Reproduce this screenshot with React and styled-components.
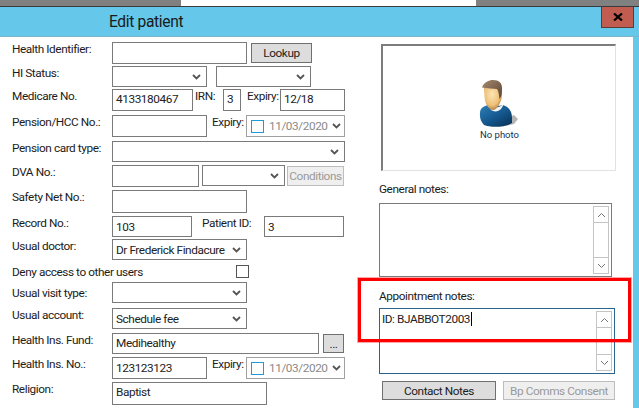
import React from "react";
import styled, { createGlobalStyle } from "styled-components";

const Global = createGlobalStyle`
  html, body { margin: 0; padding: 0; background: #fff; overflow: hidden; }
  * { box-sizing: border-box; }
`;
const FONT = `Roboto, "Open Sans", "Liberation Sans", Arial, sans-serif`;

const Page = styled.div`
  width: 639px; height: 408px; display: flex; flex-direction: column; overflow: hidden;
  font-family: ${FONT}; font-size: 11.8px; letter-spacing: -0.42px; color: #000; position: relative;
`;
const TopStrip = styled.div`
  height: 7px; display: flex; border-bottom: 1px solid #3a3a3a; flex: none;
`;
const StripSegment = styled.div`
  width: ${p => p.$w}px; background: ${p => p.$c};
`;
const TitleBar = styled.header`
  height: 30px; flex: none; background: #65c8ea; border-bottom: 1px solid #7fb4cc;
  display: flex; align-items: flex-start; padding-left: 109px; position: relative;
`;
const Title = styled.h1`
  margin: 5px 0 0; font-size: 15.6px; letter-spacing: -0.35px; font-weight: 400; line-height: 21px; color: #1a1a1a; flex: 1;
`;
const CloseButton = styled.div`
  width: 33px; height: 21px; margin-right: 5px; background: #c05c50; border: 1px solid #5c3a36; border-top: 0;
  display: flex; align-items: center; justify-content: center;
`;
const Body = styled.main`
  flex: 1; display: flex; border-right: 6px solid #65c8ea; background: #fff; min-height: 0;
`;
const LeftPane = styled.section`
  width: 379px; flex: none; padding: 5px 0 0 12px; display: flex; flex-direction: column;
`;
const RightPane = styled.section`
  flex: 1; display: flex; flex-direction: column; align-items: flex-start; position: relative;
`;
const Row = styled.div`
  height: ${p => p.$h}px; flex: none; display: flex; align-items: flex-start;
`;
const Label = styled.label`
  width: ${p => p.$w || 100}px; flex: none; line-height: 14px; margin-left: ${p => p.$ml || 0}px;
  padding-top: ${p => p.$pt ?? 0}px; white-space: nowrap; color: #1c1c1c;
`;
const Field = styled.div`
  width: ${p => p.$w}px; height: ${p => p.$h}px; flex: none; margin-left: ${p => p.$ml || 0}px;
  border: 1px solid #7a7a7a; background: #fff; padding: ${p => p.$pt ?? 2}px 0 0 3px; line-height: 14px;
  color: #222; white-space: nowrap; overflow: hidden;
`;
const SelectBox = styled.div`
  width: ${p => p.$w}px; height: 21px; flex: none; margin-left: ${p => p.$ml || 0}px;
  border: 1px solid #7a7a7a; background: #fff; display: flex; align-items: center;
  justify-content: space-between; padding: 0 5px 0 3px; line-height: 14px; white-space: nowrap; color: #222;
`;
const DateBox = styled.div`
  width: 99px; height: 22px; flex: none; margin-left: ${p => p.$ml || 0}px;
  border: 1px solid #a0a0a0; background: #fff; display: flex; align-items: center;
  padding: 0 3px 0 4px; color: #8a8a8a; white-space: nowrap;
`;
const DateCheck = styled.span`
  width: 13px; height: 13px; border: 1px solid #1e9ad6; margin-right: 5px; flex: none;
`;
const DateText = styled.span`flex: 1;`;
const Button = styled.div`
  width: ${p => p.$w}px; height: ${p => p.$h}px; flex: none; margin: ${p => p.$mt || 0}px 0 0 ${p => p.$ml || 0}px;
  border: 1px solid ${p => (p.$disabled ? "#bdbdbd" : "#707070")};
  background: ${p => (p.$disabled ? "#efefef" : "#dddddd")};
  color: ${p => (p.$disabled ? "#9a9a9a" : "#1c1c1c")};
  display: flex; align-items: center; justify-content: center; line-height: 14px; white-space: nowrap;
`;
const CheckBox = styled.span`
  width: 13px; height: 13px; border: 1px solid #555; background: #fff; flex: none;
`;
const PhotoBox = styled.div`
  width: 235px; height: 127px; margin: 7px 0 0 2px; flex: none;
  border: 1px solid #e2e2e2; border-top: 2px solid #7d7d7d; border-left: 2px solid #7d7d7d;
  display: flex; flex-direction: column; align-items: center; padding-top: 34px;
`;
const PhotoCaption = styled.span`
  font-size: 9.5px; letter-spacing: 0; line-height: 12px; margin-top: 2px; color: #16304e; margin-left: 1px;
`;
const NotesLabel = styled.div`
  line-height: 14px; margin-top: ${p => p.$mt}px; color: #1c1c1c;
`;
const NotesBox = styled.div`
  width: ${p => p.$w}px; height: ${p => p.$h}px; margin-top: ${p => p.$mt}px; flex: none;
  border: 1px solid ${p => p.$c}; display: flex; justify-content: space-between; padding: 2px 2px 2px 1px;
`;
const NotesText = styled.div`
  line-height: 14px; padding: 1px 0 0 1px; display: flex; align-items: flex-start; color: #222;
`;
const Caret = styled.span`
  width: 1px; height: 14px; background: #000; margin-left: 1px;
`;
const ScrollBar = styled.div`
  width: 16px; flex: none; border: 1px solid #c4c4c4; display: flex; flex-direction: column; justify-content: space-between;
`;
const ScrollArrow = styled.div`
  height: 16px; display: flex; align-items: center; justify-content: center;
  border-${p => (p.$up ? "bottom" : "top")}: 1px solid #c4c4c4;
`;
const ButtonRow = styled.div`
  display: flex; margin: 7px 0 0 3px; gap: 7px;
`;
const Highlight = styled.div`
  position: absolute; left: -21px; top: 241px; width: 273px; height: 64px;
  border: 3px solid #f00; outline: 1px solid rgba(255,0,0,.35); pointer-events: none;
`;

const Chevron = ({ c = "#555", up }) => (
  <svg width="9" height="6" viewBox="0 0 9 6" style={{ flex: "none", transform: up ? "rotate(180deg)" : "none" }}>
    <path d="M1 1 L4.5 4.5 L8 1" fill="none" stroke={c} strokeWidth="1.8" />
  </svg>
);
const ThinChevron = ({ up }) => (
  <svg width="9" height="6" viewBox="0 0 9 6" style={{ transform: up ? "rotate(180deg)" : "none" }}>
    <path d="M1 1 L4.5 4.5 L8 1" fill="none" stroke="#777" strokeWidth="1" />
  </svg>
);

const PersonIcon = () => (
  <svg width="40" height="47" viewBox="0 0 40 47">
    <defs>
      <radialGradient id="skin" cx="0.45" cy="0.4" r="0.65">
        <stop offset="0" stopColor="#fde6b4" />
        <stop offset="0.65" stopColor="#eec078" />
        <stop offset="1" stopColor="#a8743a" />
      </radialGradient>
      <linearGradient id="shirt" x1="0" y1="0" x2="0.9" y2="1">
        <stop offset="0" stopColor="#2f7fb8" />
        <stop offset="0.55" stopColor="#14588e" />
        <stop offset="1" stopColor="#0a3358" />
      </linearGradient>
      <linearGradient id="hair" x1="0" y1="0" x2="1" y2="1">
        <stop offset="0" stopColor="#a58a70" />
        <stop offset="1" stopColor="#5b4334" />
      </linearGradient>
    </defs>
    <path d="M28 38 L35 35 L39 39 L35 44 L26 46 Z" fill="#b4b4b4" />
    <path d="M1 33 C1 28 5 26 9 25 L14 27 L24 25 C30 27 33 31 33 38 L33 43 C28 47 12 48 5 45 C2 42 0.5 38 1 33 Z" fill="url(#shirt)" />
    <path d="M9 24 L12 30 C15 32 19 32 22 29 L25 24 L20 27 L13 28 Z" fill="#f4f4f4" />
    <path d="M5 8 C5 5 10 3 15 4 C20 4 23 8 23 14 C23 22 18 30 14 30 C10 30 6 24 5.5 17 Z" fill="url(#skin)" />
    <path d="M3 7.5 C5 2 10 0 14 0 C20 0 23 3 23 8 C23.2 12 22.5 17 20.5 19 C20 15 19.5 11 18 9 C14 9 8 8 3 7.5 Z" fill="url(#hair)" />
  </svg>
);

const Select = ({ w, ml, children }) => (
  <SelectBox $w={w} $ml={ml}>
    <span>{children}</span>
    <Chevron />
  </SelectBox>
);
const DatePicker = ({ ml }) => (
  <DateBox $ml={ml}>
    <DateCheck />
    <DateText>11/03/2020</DateText>
    <Chevron />
  </DateBox>
);
const Scroller = () => (
  <ScrollBar>
    <ScrollArrow $up><ThinChevron up /></ScrollArrow>
    <ScrollArrow><ThinChevron /></ScrollArrow>
  </ScrollBar>
);

export default function App() {
  return (
    <Page>
      <Global />
      <TopStrip>
        <StripSegment $w={181} $c="#808080" />
        <StripSegment $w={295} $c="#ffffff" />
        <StripSegment $w={163} $c="#808080" />
      </TopStrip>
      <TitleBar>
        <Title>Edit patient</Title>
        <CloseButton>
          <svg width="10" height="8" viewBox="0 0 10 8">
            <path d="M1 0.5 L9 7.5 M9 0.5 L1 7.5" stroke="#000" strokeWidth="2.2" />
          </svg>
        </CloseButton>
      </TitleBar>
      <Body>
        <LeftPane>
          <Row $h={24}>
            <Label>Health Identifier:</Label>
            <Field $w={135} $h={22} />
            <Button $w={61} $h={20} $ml={4} $mt={1}>Lookup</Button>
          </Row>
          <Row $h={23}>
            <Label>HI Status:</Label>
            <Select w={95} />
            <Select w={95} ml={9} />
          </Row>
          <Row $h={26}>
            <Label>Medicare No.</Label>
            <Field $w={81} $h={22}>4133180467</Field>
            <Label $w={28} $ml={2}>IRN:</Label>
            <Field $w={18} $h={22}>3</Field>
            <Label $w={33} $ml={6}>Expiry:</Label>
            <Field $w={65} $h={22}>12/18</Field>
          </Row>
          <Row $h={26}>
            <Label>Pension/HCC No.:</Label>
            <Field $w={95} $h={22} />
            <Label $w={34} $ml={5}>Expiry:</Label>
            <DatePicker />
          </Row>
          <Row $h={24}>
            <Label>Pension card type:</Label>
            <Select w={233} />
          </Row>
          <Row $h={25}>
            <Label>DVA No.:</Label>
            <Field $w={87} $h={22} />
            <Select w={83} ml={3} />
            <Button $w={57} $h={20} $ml={2} $mt={1} $disabled>Conditions</Button>
          </Row>
          <Row $h={26}>
            <Label>Safety Net No.:</Label>
            <Field $w={135} $h={23} />
          </Row>
          <Row $h={23}>
            <Label>Record No.:</Label>
            <Field $w={80} $h={21} $pt={3}>103</Field>
            <Label $w={62} $ml={10}>Patient ID:</Label>
            <Field $w={80} $h={21} $pt={3}>3</Field>
          </Row>
          <Row $h={26}>
            <Label>Usual doctor:</Label>
            <Select w={135}>Dr Frederick Findacure</Select>
          </Row>
          <Row $h={17}>
            <Label $w={224}>Deny access to other users</Label>
            <CheckBox />
          </Row>
          <Row $h={26}>
            <Label $pt={4}>Usual visit type:</Label>
            <Select w={135} />
          </Row>
          <Row $h={25}>
            <Label>Usual account:</Label>
            <Select w={135}>Schedule fee</Select>
          </Row>
          <Row $h={24}>
            <Label>Health Ins. Fund:</Label>
            <Field $w={207} $h={21}>Medihealthy</Field>
            <Button $w={21} $h={19} $ml={4} $mt={1}>...</Button>
          </Row>
          <Row $h={25}>
            <Label>Health Ins. No.:</Label>
            <Field $w={95} $h={22} $pt={3}>123123123</Field>
            <Label $w={34} $ml={5}>Expiry:</Label>
            <DatePicker />
          </Row>
          <Row $h={23}>
            <Label>Religion:</Label>
            <Field $w={155} $h={23}>Baptist</Field>
          </Row>
        </LeftPane>
        <RightPane>
          <PhotoBox>
            <PersonIcon />
            <PhotoCaption>No photo</PhotoCaption>
          </PhotoBox>
          <NotesLabel $mt={11}>General notes:</NotesLabel>
          <NotesBox $w={233} $h={74} $mt={7} $c="#7a7a7a">
            <span />
            <Scroller />
          </NotesBox>
          <NotesLabel $mt={12}>Appointment notes:</NotesLabel>
          <NotesBox $w={236} $h={66} $mt={5} $c="#2a6490">
            <NotesText>ID: BJABBOT2003<Caret /></NotesText>
            <Scroller />
          </NotesBox>
          <ButtonRow>
            <Button $w={114} $h={19}>Contact Notes</Button>
            <Button $w={112} $h={19} $disabled>Bp Comms Consent</Button>
          </ButtonRow>
          <Highlight />
        </RightPane>
      </Body>
    </Page>
  );
}
